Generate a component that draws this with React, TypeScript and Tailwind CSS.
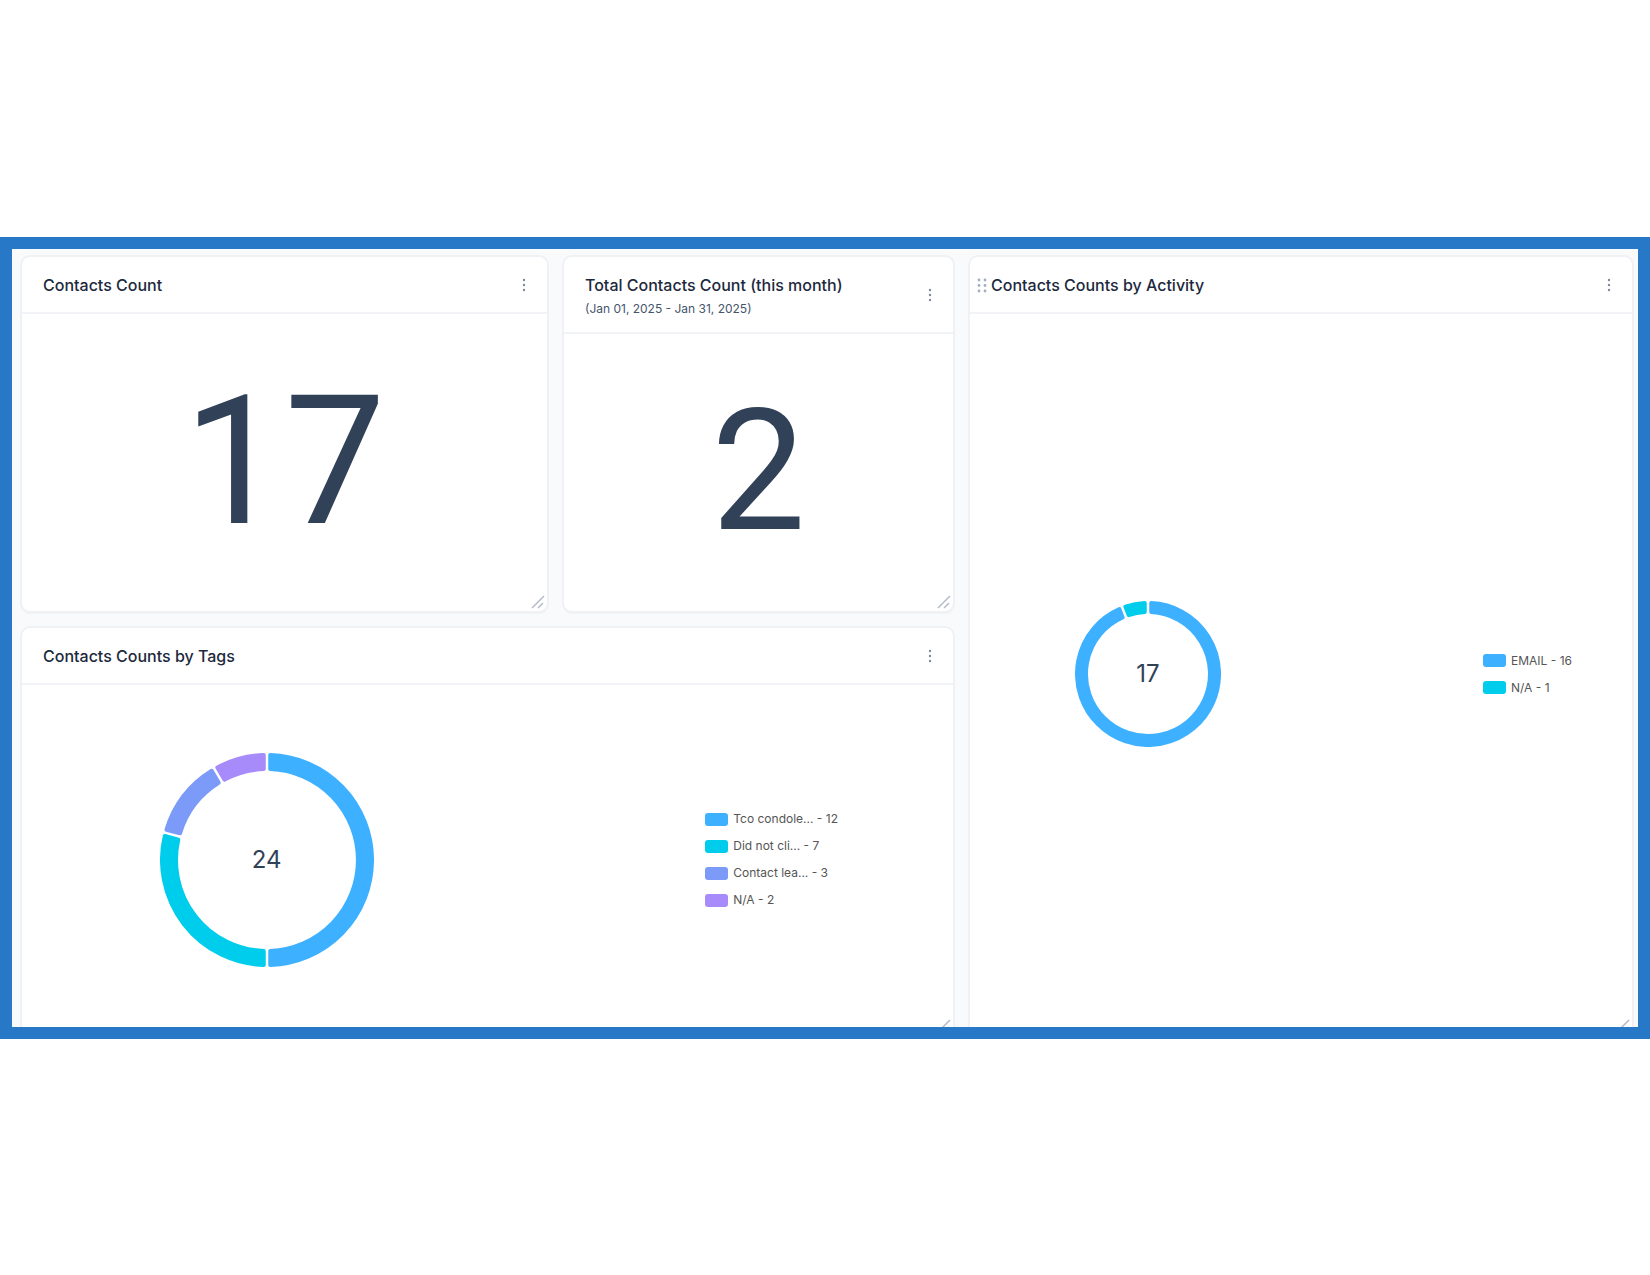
import type { ReactNode } from "react";

type Slice = { label: string; value: number; color: string };

const tags: Slice[] = [
  { label: "Tco condole...", value: 12, color: "#3db1ff" },
  { label: "Did not cli...", value: 7, color: "#00cdec" },
  { label: "Contact lea...", value: 3, color: "#7c9af8" },
  { label: "N/A", value: 2, color: "#a78bfa" },
];

const activity: Slice[] = [
  { label: "EMAIL", value: 16, color: "#3db1ff" },
  { label: "N/A", value: 1, color: "#00cdec" },
];

const CORNER = 2;
const HALF_GAP = 1.25;

// Ring slice whose straight ends stay parallel to the dividing line.
function slicePath(start: number, end: number, outer: number, inner: number) {
  const inset = HALF_GAP + CORNER;
  const ro = outer - CORNER;
  const ri = inner + CORNER;
  const point = (r: number, a: number) => `${(r * Math.sin(a)).toFixed(2)} ${(-r * Math.cos(a)).toFixed(2)}`;
  const ao = Math.asin(inset / ro);
  const ai = Math.asin(inset / ri);
  const large = end - start - 2 * ao > Math.PI ? 1 : 0;
  return `M${point(ro, start + ao)}A${ro} ${ro} 0 ${large} 1 ${point(ro, end - ao)}L${point(ri, end - ai)}A${ri} ${ri} 0 ${large} 0 ${point(ri, start + ai)}Z`;
}

function Donut({ data, outer, inner, name }: { data: Slice[]; outer: number; inner: number; name: string }) {
  const total = data.reduce((sum, d) => sum + d.value, 0);
  let angle = 0;
  return (
    <div className="grid place-items-center justify-self-center">
      <svg
        className="col-start-1 row-start-1"
        width={outer * 2}
        height={outer * 2}
        viewBox={`${-outer} ${-outer} ${outer * 2} ${outer * 2}`}
        role="img"
        aria-label={name}
      >
        {data.map((d) => {
          const start = angle;
          angle += (d.value / total) * Math.PI * 2;
          return (
            <path
              key={d.label}
              d={slicePath(start, angle, outer, inner)}
              fill={d.color}
              stroke={d.color}
              strokeWidth={CORNER * 2}
              strokeLinejoin="round"
            />
          );
        })}
      </svg>
      <span className="col-start-1 row-start-1 text-2xl text-slate-700">{total}</span>
    </div>
  );
}

function Legend({ data }: { data: Slice[] }) {
  return (
    <ul className="col-start-3 flex flex-col gap-[11px] whitespace-nowrap text-[12px] leading-4 text-[#555555]">
      {data.map((d) => (
        <li key={d.label} className="flex items-center gap-[5px]">
          <svg width="23" height="13" aria-hidden="true">
            <rect width="23" height="13" rx="3" fill={d.color} />
          </svg>
          <span>
            {d.label} - {d.value}
          </span>
        </li>
      ))}
    </ul>
  );
}

function Card({
  title,
  subtitle,
  draggable,
  className,
  children,
}: {
  title: string;
  subtitle?: string;
  draggable?: boolean;
  className: string;
  children: ReactNode;
}) {
  return (
    <section className={`relative flex flex-col rounded-lg bg-white shadow-[0_0_0_2px_#eff1f5,0_2px_2px_0_#dfe2e7] ${className}`}>
      <header className="flex items-center border-b-2 border-[#f1f3f6] pt-4 pr-4 pb-[15px]">
        <div className="flex w-[21px] shrink-0 justify-end pr-1">
          {draggable && (
            <button type="button" aria-label={`Move ${title}`} className="cursor-grab text-[#a3aebd]">
              <svg width="10" height="16" viewBox="0 0 10 16" fill="currentColor" className="block">
                {[3, 8.5, 14].map((y) => (
                  <g key={y}>
                    <circle cx="2" cy={y} r="1.4" />
                    <circle cx="8" cy={y} r="1.4" />
                  </g>
                ))}
              </svg>
            </button>
          )}
        </div>
        <div className="flex min-w-0 flex-1 flex-col gap-1">
          <h2 className="text-base font-medium text-slate-800">{title}</h2>
          {subtitle && <p className="text-xs text-slate-600">{subtitle}</p>}
        </div>
        <button type="button" aria-label={`${title} options`} className="text-[#7f8a9b]">
          <svg width="14" height="16" viewBox="0 0 14 16" fill="currentColor" className="block">
            <circle cx="7" cy="3" r="1.2" />
            <circle cx="7" cy="8" r="1.2" />
            <circle cx="7" cy="13" r="1.2" />
          </svg>
        </button>
      </header>
      {children}
      <svg
        className="absolute right-0.5 bottom-0.5 text-[#b4bcc9]"
        width="14"
        height="14"
        viewBox="0 0 14 14"
        fill="none"
        stroke="currentColor"
        strokeWidth="1.5"
        aria-hidden="true"
      >
        <path d="M1 13L13 1M7 13L12 8" />
      </svg>
    </section>
  );
}

export default function App() {
  return (
    <div className="flex min-h-screen items-center bg-white font-[Inter,sans-serif]">
      <main className="w-full overflow-hidden border-12 border-[#2779c8] bg-[#f9fafb]">
        <div className="-mb-2 grid grid-cols-[525fr_389fr_662fr] grid-rows-[minmax(354px,auto)_minmax(407px,auto)] gap-[17px] pt-2 pr-1.5 pl-2.5">
          <Card title="Contacts Count" className="">
            <div className="flex flex-1 items-center justify-center font-[Roboto,sans-serif] text-[180px] leading-none text-slate-700">
              17
            </div>
          </Card>
          <Card title="Total Contacts Count (this month)" subtitle="(Jan 01, 2025 - Jan 31, 2025)" className="">
            <div className="flex flex-1 items-center justify-center font-[Roboto,sans-serif] text-[168px] leading-none text-slate-700">
              2
            </div>
          </Card>
          <Card title="Contacts Counts by Activity" draggable className="row-span-2">
            <div className="grid flex-1 grid-cols-[356fr_157fr_149fr] items-center">
              <Donut data={activity} outer={73} inner={60} name="Contacts by activity" />
              <Legend data={activity} />
            </div>
          </Card>
          <Card title="Contacts Counts by Tags" className="col-span-2">
            <div className="grid flex-1 grid-cols-[490fr_194fr_248fr] items-center">
              <Donut data={tags} outer={107} inner={89} name="Contacts by tag" />
              <Legend data={tags} />
            </div>
          </Card>
        </div>
      </main>
    </div>
  );
}
